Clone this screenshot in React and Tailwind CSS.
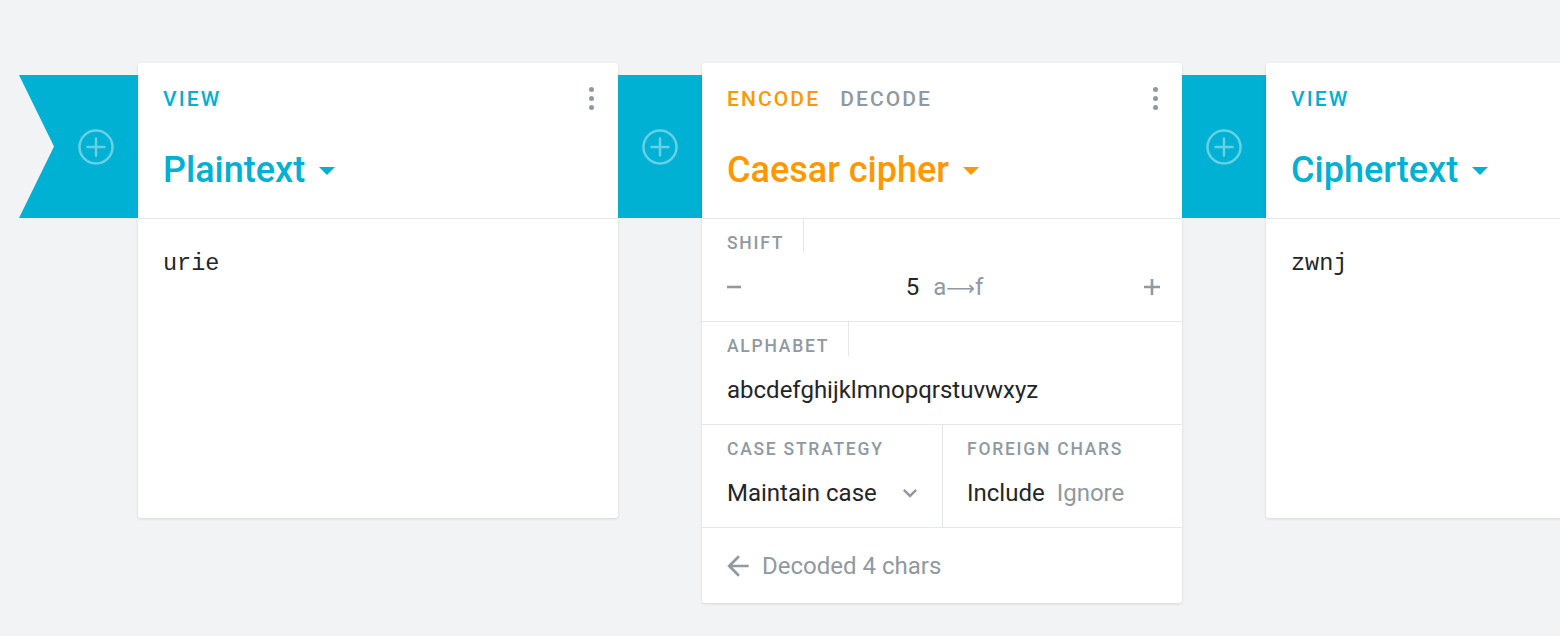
const font = { fontFamily: "Roboto, 'Liberation Sans', sans-serif" };
const gray = "#8f99a1";

function AddIcon() {
  return (
    <svg width="38" height="38" viewBox="0 0 38 38" fill="none" stroke="#ffffff" strokeOpacity="0.4" strokeWidth="2.5">
      <circle cx="19" cy="19" r="16.5" />
      <path d="M19 10.5v17M10.5 19h17" strokeLinecap="round" />
    </svg>
  );
}

// material-style icons
function MdIcon({ d, size, className }) {
  return (
    <svg width={size} height={size} viewBox="0 0 24 24" className={className}>
      <path d={d} fill={gray} />
    </svg>
  );
}

const ICONS = {
  expand: "M16.59 8.59L12 13.17 7.41 8.59 6 10l6 6 6-6z",
  back: "M20 11H7.83l5.59-5.59L12 4l-8 8 8 8 1.41-1.41L7.83 13H20v-2z",
};

function Caret({ color }) {
  return (
    <svg width="18" height="10" viewBox="0 0 18 10" className="ml-[13px] mt-[2px]">
      <path d="M1 1h16l-8 8z" fill={color} />
    </svg>
  );
}

function Dots() {
  return (
    <div className="flex flex-col gap-[4px] pt-[24px]">
      <span className="w-[5px] h-[5px] rounded-full bg-[#8f99a1]" />
      <span className="w-[5px] h-[5px] rounded-full bg-[#8f99a1]" />
      <span className="w-[5px] h-[5px] rounded-full bg-[#8f99a1]" />
    </div>
  );
}

function Connector() {
  return (
    <div className="mt-[12px] h-[143px] w-[84px] shrink-0 bg-[#00b1d3] flex items-center justify-center">
      <AddIcon />
    </div>
  );
}

function CardHeader({ tabs, title, color }) {
  return (
    <div className="flex justify-between pl-[25px] pr-[24px] border-b border-[#e4e8eb] h-[156px]">
      <div>
        <div className="flex gap-[20px] pt-[24px] text-[21px] leading-[24px] tracking-[0.1em] font-medium">
          {tabs.map((t, i) => (
            <span key={i} style={{ color: t.color }}>{t.label}</span>
          ))}
        </div>
        <div className="flex items-center mt-[37px] text-[36px] leading-[44px] font-medium" style={{ color }}>
          {title}
          <Caret color={color} />
        </div>
      </div>
      <Dots />
    </div>
  );
}

function Label({ children, divider }) {
  return (
    <div className={`w-fit pt-[14px] pr-[19px] text-[17.5px] leading-[20px] tracking-[0.1em] font-medium text-[#8f99a1] ${divider ? "border-r border-[#e4e8eb]" : ""}`}>
      {children}
    </div>
  );
}

function ViewCard({ title, text }) {
  return (
    <div className="w-[480px] h-[455px] shrink-0 bg-white rounded-[3px] shadow-[0_1px_3px_rgba(0,0,0,0.12)]">
      <CardHeader tabs={[{ label: "VIEW", color: "#00b1d3" }]} title={title} color="#00b1d3" />
      <div className="pl-[25px] pt-[27px] text-[23.5px] leading-[36px] text-[#222629]" style={{ fontFamily: "'Liberation Mono', 'DejaVu Sans Mono', monospace" }}>
        {text}
      </div>
    </div>
  );
}

function CipherCard() {
  return (
    <div className="w-[480px] shrink-0 bg-white rounded-[3px] shadow-[0_1px_3px_rgba(0,0,0,0.12)]">
      <CardHeader
        tabs={[
          { label: "ENCODE", color: "#ff9800" },
          { label: "DECODE", color: gray },
        ]}
        title="Caesar cipher"
        color="#ff9800"
      />
      <div className="h-[103px] border-b border-[#e4e8eb] pl-[25px] pr-[22px]">
        <Label divider>SHIFT</Label>
        <div className="flex items-center justify-between mt-[18px] h-[32px] text-[24px]">
          <svg width="14" height="16" viewBox="0 0 14 16">
            <path d="M0 8h14" stroke={gray} strokeWidth="2.6" />
          </svg>
          <div className="flex items-center gap-[14px] ml-[4px]">
            <span className="text-[#222629]">5</span>
            <span className="text-[#8f99a1]">
              a<span style={{ fontFamily: "'DejaVu Sans', sans-serif" }} className="text-[20px]">⟶</span>f
            </span>
          </div>
          <svg width="16" height="16" viewBox="0 0 16 16">
            <path d="M0 8h16M8 0v16" stroke={gray} strokeWidth="2.6" />
          </svg>
        </div>
      </div>
      <div className="h-[103px] border-b border-[#e4e8eb] pl-[25px]">
        <Label divider>ALPHABET</Label>
        <div className="mt-[18px] h-[32px] leading-[32px] text-[24px] text-[#222629]">abcdefghijklmnopqrstuvwxyz</div>
      </div>
      <div className="h-[103px] border-b border-[#e4e8eb] flex">
        <div className="flex-1 pl-[25px] pr-[18px]">
          <Label>CASE STRATEGY</Label>
          <div className="flex items-center justify-between mt-[18px] h-[32px] text-[24px] text-[#222629]">
            Maintain case
            <MdIcon d={ICONS.expand} size={28} />
          </div>
        </div>
        <div className="w-[240px] border-l border-[#e4e8eb] pl-[24px]">
          <Label>FOREIGN CHARS</Label>
          <div className="flex items-center gap-[12px] mt-[18px] h-[32px] text-[24px]">
            <span className="text-[#222629]">Include</span>
            <span className="text-[#8f99a1]">Ignore</span>
          </div>
        </div>
      </div>
      <div className="h-[75px] pl-[25px] flex items-center text-[24px] text-[#8f99a1]">
        <MdIcon d={ICONS.back} size={32} className="-ml-[5px] mr-[8px]" />
        Decoded 4 chars
      </div>
    </div>
  );
}

export default function App() {
  return (
    <div className="w-[1560px] h-[636px] overflow-hidden bg-[#f2f3f5]" style={font}>
      <div className="flex items-start pt-[63px] pl-[19px]">
        <div
          className="mt-[12px] h-[143px] w-[119px] shrink-0 bg-[#00b1d3] flex items-center justify-center pl-[35px]"
          style={{ clipPath: "polygon(0 0, 100% 0, 100% 100%, 0 100%, 35px 50%)" }}
        >
          <AddIcon />
        </div>
        <ViewCard title="Plaintext" text="urie" />
        <Connector />
        <CipherCard />
        <Connector />
        <ViewCard title="Ciphertext" text="zwnj" />
      </div>
    </div>
  );
}
